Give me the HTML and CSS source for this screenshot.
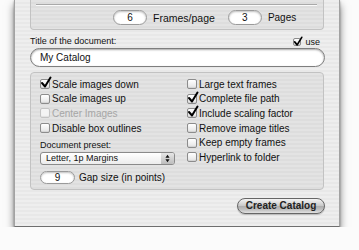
FILE: index.html
```html
<!DOCTYPE html>
<html lang="en">
<head>
    <meta charset="UTF-8">
    <meta name="viewport" content="width=device-width, initial-scale=1.0">
    <title>Create Catalog</title>
    <link rel="stylesheet" href="styles.css">
</head>
<body>
    <div class="window">
        <div class="group top">
            <div class="rule"></div>
            <div class="counts">
                <span class="num">6</span><span class="unit">Frames/page</span>
                <span class="num">3</span><span class="unit">Pages</span>
            </div>
        </div>

        <div class="title_row">
            <span class="small">Title of the document:</span>
            <label class="cb mini"><span class="box"><svg class="tick" viewBox="0 0 12 13"><path d="M2 7 L5 10.5 L10.5 1.5"/></svg></span>use</label>
        </div>
        <div class="field">My Catalog</div>

        <div class="group opts">
            <div class="col">
                <label class="cb"><span class="box"><svg class="tick" viewBox="0 0 12 13"><path d="M2 7 L5 10.5 L10.5 1.5"/></svg></span>Scale images down</label>
                <label class="cb"><span class="box"></span>Scale images up</label>
                <label class="cb off"><span class="box"></span>Center Images</label>
                <label class="cb"><span class="box"></span>Disable box outlines</label>
                <div class="small preset_label">Document preset:</div>
                <div class="popup">
                    <span class="popup_text">Letter, 1p Margins</span>
                    <span class="popup_arrows"><svg viewBox="0 0 6 10"><path d="M3 0.5 L5.5 4 L0.5 4 Z M3 9.5 L5.5 6 L0.5 6 Z"/></svg></span>
                </div>
                <div class="gap_row">
                    <span class="num small_num">9</span><span class="unit">Gap size (in points)</span>
                </div>
            </div>
            <div class="col">
                <label class="cb"><span class="box"></span>Large text frames</label>
                <label class="cb"><span class="box"><svg class="tick" viewBox="0 0 12 13"><path d="M2 7 L5 10.5 L10.5 1.5"/></svg></span>Complete file path</label>
                <label class="cb"><span class="box"><svg class="tick" viewBox="0 0 12 13"><path d="M2 7 L5 10.5 L10.5 1.5"/></svg></span>Include scaling factor</label>
                <label class="cb"><span class="box"></span>Remove image titles</label>
                <label class="cb"><span class="box"></span>Keep empty frames</label>
                <label class="cb"><span class="box"></span>Hyperlink to folder</label>
            </div>
        </div>

        <div class="actions">
            <button class="btn">Create Catalog</button>
        </div>
    </div>
</body>
</html>
```

FILE: styles.css
```css
body { margin: 0; background: #fbfbfb; font-family: "Liberation Sans", Arial, sans-serif; color: #111; }

.window { width: 294px; height: 226px; margin-left: 14px; padding: 0 15px;
    background: repeating-linear-gradient(#eeeeee 0 2px, #e8e8e8 2px 4px);
    border-left: 1px solid #a2a2a2; border-right: 1px solid #a2a2a2; border-bottom: 1px solid #6f6f6f;
    box-shadow: 0 5px 8px rgba(0,0,0,0.5), 0 1px 2px rgba(0,0,0,0.35); }

.group { box-sizing: border-box; border: 1px solid #c2c2c2; border-radius: 4px;
    background: repeating-linear-gradient(#e3e3e3 0 2px, #dddddd 2px 4px); }
.group.top { height: 30px; border-top: none; border-radius: 0 0 4px 4px; padding-top: 4px; }
.rule { height: 0; margin: 0 6px 0 5px; border-top: 1px solid #a9a9a9; border-bottom: 1px solid #fafafa; }

.counts { display: flex; align-items: center; height: 15px; margin-top: 4px; padding-left: 82px; }
.num { box-sizing: border-box; width: 34px; height: 15px; border: 1px solid #9a9a9a; border-radius: 8px; background: #fff;
    box-shadow: inset 0 1px 2px rgba(0,0,0,0.25); font-size: 10px; line-height: 13px; text-align: center; }
.unit { font-size: 10.5px; margin-left: 6px; margin-right: 13px; }
.counts .unit:last-child { font-size: 10px; }

.small { font-size: 9px; line-height: 11px; }
.title_row { display: flex; justify-content: space-between; align-items: flex-end; height: 11px; margin-top: 6px; }
.field { box-sizing: border-box; height: 19px; width: 295px; margin-top: 1px; padding-left: 9px; border: 1px solid #7e7e7e; border-radius: 10px;
    background: #fff; box-shadow: inset 0 1px 2px rgba(0,0,0,0.35); font-size: 10px; line-height: 17px; }

.opts { display: flex; height: 118px; margin-top: 5px; padding: 4px 0 0 9px; }
.opts .col { display: flex; flex-direction: column; }
.opts .col:first-child { width: 147px; }

.cb { display: flex; align-items: center; height: 14.6px; font-size: 10px; white-space: nowrap; }
.cb .box { position: relative; box-sizing: border-box; width: 10px; height: 10px; margin-right: 2px; border: 1px solid #8c8c8c; border-radius: 2px;
    background: linear-gradient(#ffffff, #e4e4e4); box-shadow: inset 0 -1px 1px rgba(0,0,0,0.08); }
.cb.off { color: #a6a6a6; }
.cb.off .box { border-color: #c4c4c4; background: #f4f4f4; }
.cb.mini { height: 11px; font-size: 9px; margin-right: 4px; }
.cb.mini .box { width: 8px; height: 8px; margin-right: 4px; }
.tick { position: absolute; left: -1px; top: -4px; width: 12px; height: 13px; overflow: visible; }
.tick path { fill: none; stroke: #000; stroke-width: 2; stroke-linecap: round; stroke-linejoin: round; }
.mini .tick { width: 10px; height: 11px; top: -3px; }

.preset_label { margin-top: 5px; }
.popup { display: flex; box-sizing: border-box; width: 135px; height: 13px; margin-top: 1px; border: 1px solid #8a8a8a; border-radius: 3px;
    background: linear-gradient(#ffffff, #ececec); }
.popup_text { flex: 1; font-size: 9px; line-height: 11px; padding-left: 5px; }
.popup_arrows { display: flex; align-items: center; justify-content: center; width: 13px; border-radius: 0 2px 2px 0;
    background: linear-gradient(#e6e6e6, #bdbdbd); }
.popup_arrows svg { width: 5px; height: 9px; }
.popup_arrows path { fill: #111; }

.gap_row { display: flex; align-items: center; margin-top: 6px; }
.small_num { width: 35px; height: 13px; line-height: 11px; }
.gap_row .unit { font-size: 10px; margin-left: 4px; }

.actions { display: flex; justify-content: flex-end; margin: 8px -1px 0 0; }
.btn { box-sizing: border-box; width: 88px; height: 16px; padding: 0; border: 1px solid #666; border-radius: 8px;
    background: linear-gradient(#f4f4f4 0%, #c9c9c9 48%, #adadad 52%, #c4c4c4 80%, #e2e2e2 100%);
    box-shadow: 0 1px 1px rgba(0,0,0,0.2); font-family: "Liberation Sans", Arial, sans-serif; font-size: 10px; font-weight: bold; color: #222; line-height: 14px; }
```
